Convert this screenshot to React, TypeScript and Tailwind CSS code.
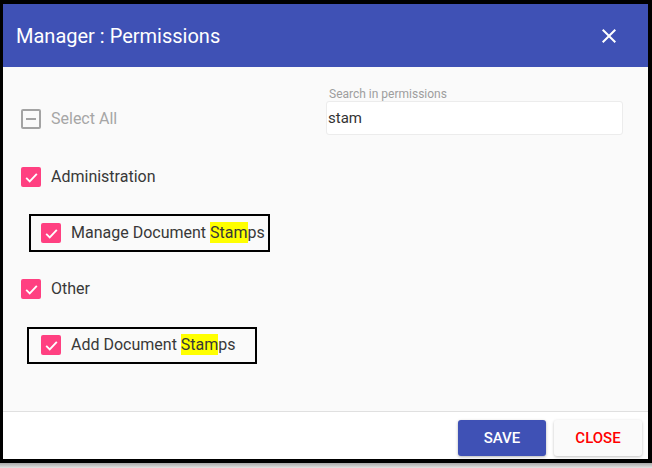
import React from 'react';

function Check({ state }: { state: 'checked' | 'indeterminate' }) {
  if (state === 'indeterminate') {
    return (
      <div className="w-5 h-5 rounded-[2px] border-2 border-[#a3a3a3] flex items-center justify-center shrink-0">
        <div className="w-[10px] h-[2px] bg-[#a3a3a3]" />
      </div>
    );
  }
  return (
    <div className="w-5 h-5 rounded-[2px] bg-[#FF4081] flex items-center justify-center shrink-0">
      <svg width="17" height="17" viewBox="0 0 24 24" fill="none">
        <path d="M4.5 12.5l5 5L19.5 7" stroke="white" strokeWidth="2.6" />
      </svg>
    </div>
  );
}

function Row({ label, muted }: { label: React.ReactNode; muted?: boolean }) {
  return (
    <div className="h-5 flex items-center gap-[10px]">
      <Check state={muted ? 'indeterminate' : 'checked'} />
      <span className={`text-base leading-5 ${muted ? 'text-[#a6a6a6]' : 'text-[#383838]'}`}>{label}</span>
    </div>
  );
}

function Hl({ pre }: { pre: string }) {
  return (
    <>
      {pre}
      <span className="bg-[#FFFF00] text-[#383838] py-[1px]">Stam</span>ps
    </>
  );
}

export default function App() {
  return (
    <div className="w-[652px] h-[468px] bg-black flex flex-col font-['Roboto',sans-serif]">
      <div className="mt-[4px] ml-[3px] mr-[4px] h-[455px] flex flex-col bg-white">
        {/* header */}
        <div className="h-[63px] bg-[#3F51B5] flex items-center justify-between pl-[13px] pr-[27px] shrink-0">
          <h1 className="text-[20px] text-white font-normal">Manager : Permissions</h1>
          <svg width="24" height="24" viewBox="0 0 24 24" fill="white">
            <path d="M19 6.41L17.59 5 12 10.59 6.41 5 5 6.41 10.59 12 5 17.59 6.41 19 12 13.41 17.59 19 19 17.59 13.41 12z" />
          </svg>
        </div>

        {/* body */}
        <div className="h-[344px] bg-[#FAFAFA] pl-[18px] pt-[20px] shrink-0">
          <div className="flex items-end">
            <div className="flex-1 h-[34px] flex items-center pt-[2px]">
              <Row label="Select All" muted />
            </div>
            <div className="w-[297px] mr-[25px]">
              <div className="text-[12px] leading-[14px] text-[#9e9e9e] pl-[3px]">Search in permissions</div>
              <div className="h-[34px] bg-white border border-[#ececec] rounded-[3px] flex items-center text-[15px] text-[#333] pl-[1px]">
                stam
              </div>
            </div>
          </div>

          <div className="mt-[32px] flex flex-col gap-[36px]">
            <Row label="Administration" />
            <div className="relative pl-[20px]">
              <div className="absolute left-[8px] top-[-9px] w-[241px] h-[38px] border-2 border-black" />
              <Row label={<Hl pre="Manage Document " />} />
            </div>
            <Row label="Other" />
            <div className="relative pl-[20px]">
              <div className="absolute left-[6px] top-[-8px] w-[230px] h-[37px] border-2 border-black" />
              <Row label={<Hl pre="Add Document " />} />
            </div>
          </div>
        </div>

        {/* footer */}
        <div className="flex-1 border-t border-[#e0e0e0] bg-white flex justify-end items-start gap-2 pt-[8px] pr-[6px]">
          <button className="w-[88px] h-9 rounded-[3px] bg-[#3F51B5] text-white text-[15px] font-medium shadow-[0_1px_3px_rgba(0,0,0,0.3)]">
            SAVE
          </button>
          <button className="w-[88px] h-9 rounded-[3px] bg-[#FAFAFA] text-[#FF0000] text-[15px] font-medium shadow-[0_1px_3px_rgba(0,0,0,0.25)]">
            CLOSE
          </button>
        </div>
      </div>
      <div className="mt-[4px] h-[5px] bg-gradient-to-b from-[#a8a8a8] to-[#e4e4e4]" />
    </div>
  );
}
